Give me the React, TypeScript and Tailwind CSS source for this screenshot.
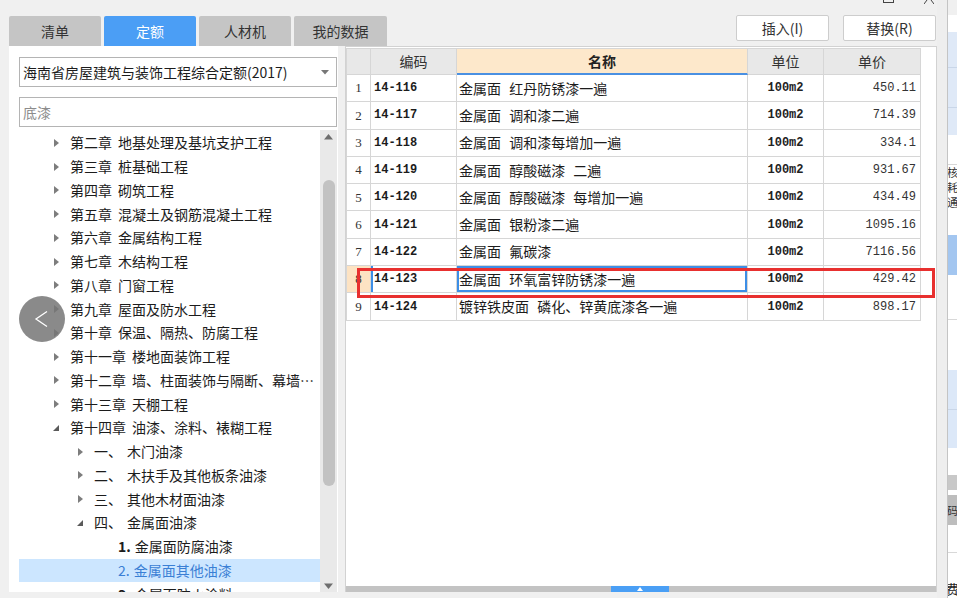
import React from "react";

const cjk = "font-['Noto_Sans_CJK_SC',sans-serif]";
const mono = "font-['Liberation_Mono',monospace]";

type TreeItem = {
	level: 1 | 2 | 3;
	prefix: string;
	name: string;
	open?: boolean;
	leaf?: boolean;
	selected?: boolean;
};

const tree: TreeItem[] = [
	{ level: 1, prefix: "第二章", name: "地基处理及基坑支护工程" },
	{ level: 1, prefix: "第三章", name: "桩基础工程" },
	{ level: 1, prefix: "第四章", name: "砌筑工程" },
	{ level: 1, prefix: "第五章", name: "混凝土及钢筋混凝土工程" },
	{ level: 1, prefix: "第六章", name: "金属结构工程" },
	{ level: 1, prefix: "第七章", name: "木结构工程" },
	{ level: 1, prefix: "第八章", name: "门窗工程" },
	{ level: 1, prefix: "第九章", name: "屋面及防水工程" },
	{ level: 1, prefix: "第十章", name: "保温、隔热、防腐工程" },
	{ level: 1, prefix: "第十一章", name: "楼地面装饰工程" },
	{ level: 1, prefix: "第十二章", name: "墙、柱面装饰与隔断、幕墙工程" },
	{ level: 1, prefix: "第十三章", name: "天棚工程" },
	{ level: 1, prefix: "第十四章", name: "油漆、涂料、裱糊工程", open: true },
	{ level: 2, prefix: "一、", name: "木门油漆" },
	{ level: 2, prefix: "二、", name: "木扶手及其他板条油漆" },
	{ level: 2, prefix: "三、", name: "其他木材面油漆" },
	{ level: 2, prefix: "四、", name: "金属面油漆", open: true },
	{ level: 3, prefix: "1.", name: "金属面防腐油漆", leaf: true },
	{ level: 3, prefix: "2.", name: "金属面其他油漆", leaf: true, selected: true },
	{ level: 3, prefix: "3.", name: "金属面防火涂料", leaf: true },
];

const rows = [
	["14-116", "金属面 红丹防锈漆一遍", "450.11"],
	["14-117", "金属面 调和漆二遍", "714.39"],
	["14-118", "金属面 调和漆每增加一遍", "334.1"],
	["14-119", "金属面 醇酸磁漆 二遍", "931.67"],
	["14-120", "金属面 醇酸磁漆 每增加一遍", "434.49"],
	["14-121", "金属面 银粉漆二遍", "1095.16"],
	["14-122", "金属面 氟碳漆", "7116.56"],
	["14-123", "金属面 环氧富锌防锈漆一遍", "429.42"],
	["14-124", "镀锌铁皮面 磷化、锌黄底漆各一遍", "898.17"],
];

function Arrow({ open }: { open?: boolean }) {
	if (open)
		return (
			<svg width="8" height="8" viewBox="0 0 8 8">
				<polygon points="7,1 7,7 1,7" fill="#5a5a5a" />
			</svg>
		);
	return (
		<svg width="8" height="10" viewBox="0 0 8 10">
			<polygon points="2,1 7,5 2,9" fill="#7d7d7d" />
		</svg>
	);
}

function TreeRow({ item }: { item: TreeItem }) {
	const pad =
		item.level === 1 ? "pl-[33px]" : item.level === 2 ? "pl-[57px]" : "pl-[99px]";
	return (
		<div
			className={`flex h-[23.75px] shrink-0 items-center ${pad} ${
				item.selected ? "bg-[#cce6ff] text-[#3a7fd5]" : "text-[#1c1c1c]"
			}`}
		>
			{!item.leaf && (
				<span className="flex w-[18px] shrink-0 items-center">
					<Arrow open={item.open} />
				</span>
			)}
			{item.level === 1 && (
				<span className="flex min-w-0 items-center gap-[6px] whitespace-nowrap">
					<span>{item.prefix}</span>
					<span className="min-w-0 truncate pr-[4px]">{item.name}</span>
				</span>
			)}
			{item.level === 2 && (
				<span className="flex items-center whitespace-nowrap">
					<span className="w-[33px]">{item.prefix}</span>
					<span>{item.name}</span>
				</span>
			)}
			{item.level === 3 && (
				<span className="flex items-center gap-[4px] whitespace-nowrap">
					<span className={item.selected ? "" : "font-bold"}>{item.prefix}</span>
					<span>{item.name}</span>
				</span>
			)}
		</div>
	);
}

function RightStrip() {
	return (
		<div className="flex h-[598px] w-[20px] shrink-0">
			<div className="w-[10px] bg-[#eeeeee]" />
			<div className="w-[1px] bg-[#c4c4c4]" />
			<div className="flex w-[9px] flex-col overflow-hidden bg-white">
				<div className="h-[15px] shrink-0 bg-[#f0f0f0]" />
				<div className="h-[17px] shrink-0" />
				<div className="h-[36px] shrink-0 border-b border-[#c9d6e8] bg-[#dfe9f7]" />
				<div className="h-[40px] shrink-0 border-b border-[#c9d6e8] bg-[#dfe9f7]" />
				<div className="h-[27px] shrink-0 bg-[#dfe9f7]" />
				<div className="h-[30px] shrink-0 border-b border-[#d8d8d8]" />
				<div className={`flex h-[45px] shrink-0 flex-col text-[11px] leading-[15px] text-[#333] ${cjk}`}>
					<div className="-ml-[1px] h-[15px] overflow-hidden">核</div>
					<div className="-ml-[1px] h-[15px] overflow-hidden">耗</div>
					<div className="-ml-[1px] h-[15px] overflow-hidden">通</div>
				</div>
				<div className="h-[25px] shrink-0" />
				<div className="h-[40px] shrink-0 bg-[#a3c6f0]" />
				<div className="h-[45px] shrink-0 border-b border-[#d8d8d8]" />
				<div className="h-[50px] shrink-0" />
				<div className="h-[40px] shrink-0 border-b border-[#c9d6e8] bg-[#dce8f8]" />
				<div className="h-[38px] shrink-0 bg-[#dce8f8]" />
				<div className="h-[27px] shrink-0" />
				<div className="h-[15px] shrink-0 bg-[#c8c8c8]" />
				<div className="h-[5px] shrink-0" />
				<div className={`h-[30px] shrink-0 bg-[#bdbdbd] text-[11px] leading-[30px] text-[#333] ${cjk}`}>
					<span className="-ml-[1px]">码</span>
				</div>
				<div className="h-[28px] shrink-0 border-b border-[#d8d8d8]" />
				<div className="h-[27px] shrink-0" />
				<div className={`h-[18px] shrink-0 text-[13px] leading-[18px] text-[#222] ${cjk}`}>
					<span className="-ml-[2px]">费</span>
				</div>
			</div>
		</div>
	);
}

export default function App() {
	return (
		<div className={`relative flex h-[598px] w-[957px] overflow-hidden bg-[#f0f0f0] text-[14px] ${cjk}`}>
			<div className="flex w-[937px] shrink-0 flex-col">
				{/* window controls, only their lower edge shows */}
				<div className="flex h-[15px] shrink-0 items-start justify-end gap-[30px] pr-[1px]">
					<div className="-mt-[1px] h-[4px] w-[11px] border-x border-b border-[#444]" />
					<svg width="10" height="4" viewBox="0 0 10 4" className="mr-[2px]">
						<line x1="0" y1="4" x2="3" y2="0" stroke="#444" strokeWidth="1" />
						<line x1="10" y1="4" x2="7" y2="0" stroke="#444" strokeWidth="1" />
					</svg>
				</div>

				{/* tabs + buttons */}
				<div className="flex h-[31px] shrink-0 items-start justify-between">
					<div className="ml-[9px] mt-[1px] flex h-[30px] gap-[3px]">
						<div className="flex w-[92px] items-center justify-center rounded-t-[2px] bg-[#c5c5c5] text-[#333]">
							清单
						</div>
						<div className="flex w-[92px] items-center justify-center rounded-t-[2px] bg-[#4b9ef5] text-white">
							定额
						</div>
						<div className="flex w-[92px] items-center justify-center rounded-t-[2px] bg-[#c5c5c5] text-[#333]">
							人材机
						</div>
						<div className="flex w-[93px] items-center justify-center rounded-t-[2px] bg-[#c5c5c5] text-[#333]">
							我的数据
						</div>
					</div>
					<div className="mr-[1px] flex gap-[14px]">
						<button className="flex h-[26px] w-[93px] items-center justify-center rounded-[2px] border border-[#cdcdcd] bg-white text-[#333]">
							插入(I)
						</button>
						<button className="flex h-[26px] w-[93px] items-center justify-center rounded-[2px] border border-[#cdcdcd] bg-white text-[#333]">
							替换(R)
						</button>
					</div>
				</div>

				{/* body */}
				<div className="flex h-[546px] shrink-0">
					{/* left panel */}
					<div className="relative ml-[9px] flex w-[329px] shrink-0 flex-col bg-white pl-[10px] pr-[1px]">
						<div className="mt-[11px] flex h-[30px] shrink-0 items-center justify-between border border-[#b4b4b4] pl-[3px] pr-[7px] text-[#1c1c1c]">
							<span className="whitespace-nowrap">海南省房屋建筑与装饰工程综合定额(2017)</span>
							<svg width="8" height="5" viewBox="0 0 8 5">
								<polygon points="0,0 8,0 4,4.5" fill="#777" />
							</svg>
						</div>
						<div className="mt-[10px] flex h-[30px] shrink-0 items-center border border-[#b4b4b4] pl-[3px] text-[#8c8c8c]">
							底漆
						</div>
						<div className="mt-[3px] flex min-h-0 flex-1">
							<div className="flex min-w-0 flex-1 flex-col overflow-hidden pt-[1px]">
								{tree.map((t) => (
									<TreeRow key={t.prefix + t.name} item={t} />
								))}
							</div>
							<div className="flex w-[17px] shrink-0 flex-col items-center bg-[#e9e9e9]">
								<svg width="9" height="6" viewBox="0 0 9 6" className="mt-[4px]">
									<polygon points="0,5.5 9,5.5 4.5,0" fill="#6e6e6e" />
								</svg>
								<div className="mt-[40px] h-[306px] w-[12px] rounded-[6px] bg-[#c2c2c2]" />
								<div className="flex-1" />
								<svg width="9" height="6" viewBox="0 0 9 6" className="mb-[3px]">
									<polygon points="0,0.5 9,0.5 4.5,6" fill="#6e6e6e" />
								</svg>
							</div>
						</div>
						{/* floating back button */}
						<div className="absolute left-[10px] top-[250px] flex h-[46px] w-[46px] items-center justify-center rounded-full bg-[rgba(118,118,118,0.85)]">
							<svg width="46" height="46" viewBox="0 0 46 46">
								<polyline points="28,15.5 17,23 28,30.5" fill="none" stroke="#fff" strokeWidth="1.3" />
							</svg>
						</div>
					</div>

					{/* right panel */}
					<div className="relative ml-[7px] flex w-[592px] shrink-0 flex-col border-x border-t border-[#d2d2d2] bg-white">
						<div className="mt-[1px] flex w-[575px] flex-col border-l border-t border-[#d6d6d6]">
							<div className="flex h-[26px] shrink-0 text-[#333]">
								<div className="w-[24px] border-b border-r border-[#d6d6d6] bg-[#e8e8e8]" />
								<div className="flex w-[86px] items-center justify-center border-b border-r border-[#d6d6d6] bg-[#e8e8e8]">
									编码
								</div>
								<div className="flex w-[291px] items-center justify-center border-b-2 border-r border-b-[#4a90e2] border-r-[#d6d6d6] bg-[#fde8cb] font-bold text-[#222]">
									名称
								</div>
								<div className="flex w-[76px] items-center justify-center border-b border-r border-[#d6d6d6] bg-[#e8e8e8]">
									单位
								</div>
								<div className="flex w-[97px] items-center justify-center border-b border-r border-[#d6d6d6] bg-[#e8e8e8]">
									单价
								</div>
							</div>
							{rows.map((r, i) => {
								const sel = i === 7;
								return (
									<div key={r[0]} className="flex h-[27.3px] shrink-0 text-[#1c1c1c]">
										<div
											className={`flex w-[24px] items-center justify-center border-b border-r border-[#d6d6d6] font-['Liberation_Serif',serif] text-[13px] text-[#333] ${
												sel ? "bg-[#fde3c3]" : ""
											}`}
										>
											{i + 1}
										</div>
										<div
											className={`flex w-[86px] items-center border-b border-r border-[#d6d6d6] pl-[3px] text-[12px] font-bold ${mono} ${
												sel ? "shadow-[inset_2px_0_0_#3d8ee6]" : ""
											}`}
										>
											{r[0]}
										</div>
										<div
											className={`flex w-[291px] items-center whitespace-nowrap border-b border-r border-[#d6d6d6] pl-[2px] [word-spacing:5px] ${
												sel ? "shadow-[inset_0_0_0_2px_#3d8ee6]" : ""
											}`}
										>
											{r[1]}
										</div>
										<div className={`flex w-[76px] items-center justify-center border-b border-r border-[#d6d6d6] text-[12px] font-bold text-[#222] ${mono}`}>
											100m2
										</div>
										<div className={`flex w-[97px] items-center justify-end border-b border-r border-[#d6d6d6] pr-[4px] text-[12px] text-[#333] ${mono}`}>
											{r[2]}
										</div>
									</div>
								);
							})}
						</div>
						<div className="flex-1" />
						<div className="flex h-[6px] shrink-0 bg-[#c3c3c3]">
							<div className="ml-[265px] flex w-[58px] items-center justify-center bg-[#4a9ff5]">
								<svg width="6" height="4" viewBox="0 0 6 4">
									<polygon points="0,4 6,4 3,0" fill="#fff" />
								</svg>
							</div>
						</div>
						{/* red highlight annotation */}
						<div className="absolute left-[11px] top-[221px] h-[30px] w-[578px] border-[3px] border-[#e8302f]" />
					</div>
				</div>
			</div>
			<RightStrip />
		</div>
	);
}
